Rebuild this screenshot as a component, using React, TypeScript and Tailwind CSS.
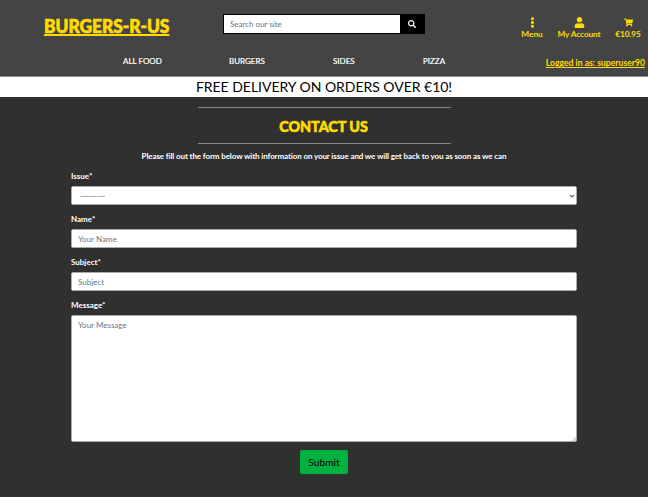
import type { ReactNode } from 'react';
import { FaEllipsisV, FaSearch, FaShoppingCart, FaUser } from 'react-icons/fa';

const control =
  'block w-full rounded-[2px] border border-[#a9abb3] bg-white px-[6px] text-[8px] leading-[12px] text-[#495057] placeholder:text-[#6c757d] placeholder:opacity-100 outline-none';

function Field({ label, children }: { label: string; children: ReactNode }) {
  return (
    <label className="block">
      <span className="mb-[4px] block h-[12px] text-[8px] font-bold leading-[12px] text-white">{label}</span>
      {children}
    </label>
  );
}

function HeaderLink({ icon, text, className }: { icon: ReactNode; text: string; className: string }) {
  return (
    <a className={`flex shrink-0 flex-col items-center whitespace-nowrap text-[8.3px] font-bold leading-[12px] ${className}`}>
      <span className="flex h-[12px] items-center">{icon}</span>
      <span>{text}</span>
    </a>
  );
}

export default function App() {
  return (
    <div className="h-[497px] w-[648px] overflow-hidden border-b border-[#38302f] bg-[#303030] font-['Lato',sans-serif]">
      <header className="h-[77px] border-b border-[#8a8a8a] bg-[#444444]">
        <div className="flex h-[48px] items-start">
          <a className="ml-[44px] mt-[13px] w-[179px] shrink-0 origin-left scale-x-[0.952] whitespace-nowrap text-[18.2px] font-black leading-[26px] text-[#ffdb00] underline decoration-[1.5px] underline-offset-[1px] [text-decoration-skip-ink:none] [-webkit-text-stroke:0.7px_#ffdb00]">
            BURGERS-R-US
          </a>
          <form className="mt-[14px] flex h-[20px] w-[202px] shrink-0 border border-black">
            <input
              className="w-[176px] shrink-0 bg-white pl-[6px] text-[8px] text-[#495057] outline-none placeholder:text-[#6c757d]"
              placeholder="Search our site"
            />
            <button type="button" className="flex flex-1 items-center justify-center bg-black text-white">
              <FaSearch size={8} />
            </button>
          </form>
          <nav className="mt-[16px] flex shrink-0 text-[#ffdb00]">
            <HeaderLink className="ml-[86px] w-[42px]" icon={<FaEllipsisV size={11} />} text="Menu" />
            <HeaderLink className="w-[52px] tracking-[-0.12px]" icon={<FaUser size={11} />} text="My Account" />
            <HeaderLink className="ml-[3px] w-[40px] tracking-[-0.1px]" icon={<FaShoppingCart size={9} />} text="€10.95" />
          </nav>
        </div>
        <div className="flex h-[28px] items-start whitespace-nowrap text-[8px] leading-[12px]">
          <nav className="flex w-[500px] pt-[7px] text-white [-webkit-text-stroke:0.2px_#ffffff]">
            <a className="ml-[123px] w-[106px]">ALL FOOD</a>
            <a className="w-[104px]">BURGERS</a>
            <a className="w-[90px]">SIDES</a>
            <a>PIZZA</a>
          </nav>
          <a className="ml-auto mr-[3px] pt-[9px] text-[8.65px] font-bold text-[#ffdb00] underline">
            Logged in as: superuser90
          </a>
        </div>
      </header>
      <div className="h-[20px] bg-white text-center text-[14px] leading-[20px] tracking-[-0.03px] text-black">
        FREE DELIVERY ON ORDERS OVER €10!
      </div>
      <main className="pt-[10px]">
        <div className="mx-auto flex h-[37px] w-[253px] items-center justify-center border-y border-[#858585]">
          <h1 className="scale-x-[0.95] text-[15px] font-black leading-[20px] text-[#ffdb00] [-webkit-text-stroke:0.6px_#ffdb00]">
            CONTACT US
          </h1>
        </div>
        <p className="mt-[6px] text-center text-[8px] font-bold leading-[12px] tracking-[-0.115px] text-white">
          Please fill out the form below with information on your issue and we will get back to you as soon as we can
        </p>
        <form className="mx-auto mt-[8px] flex w-[506px] flex-col gap-[8px]">
          <Field label="Issue*">
            <span className={`${control} flex h-[19px] items-center justify-between pl-[8px] pr-[1px]`}>
              <span className="tracking-[-0.2px]">---------</span>
              <svg className="size-[6px]" viewBox="0 0 6 6" fill="none" stroke="#6c757d" strokeWidth="1.2">
                <path d="M1 2l2 2 2-2" />
              </svg>
            </span>
          </Field>
          <Field label="Name*">
            <input className={`${control} h-[19px]`} placeholder="Your Name" />
          </Field>
          <Field label="Subject*">
            <input className={`${control} h-[19px]`} placeholder="Subject" />
          </Field>
          <Field label="Message*">
            <span className="relative block">
              <textarea className={`${control} h-[127px] resize-none pt-[3px]`} placeholder="Your Message" />
              <svg className="absolute bottom-px right-px size-[4px]" viewBox="0 0 4 4" stroke="#888888" strokeWidth="0.6">
                <path d="M0 4l4-4M2 4l2-2" />
              </svg>
            </span>
          </Field>
          <button
            type="button"
            className="h-[24px] w-[48px] self-center rounded-[2px] bg-[#00b140] text-[10.2px] leading-[24px] text-black"
          >
            Submit
          </button>
        </form>
      </main>
    </div>
  );
}
